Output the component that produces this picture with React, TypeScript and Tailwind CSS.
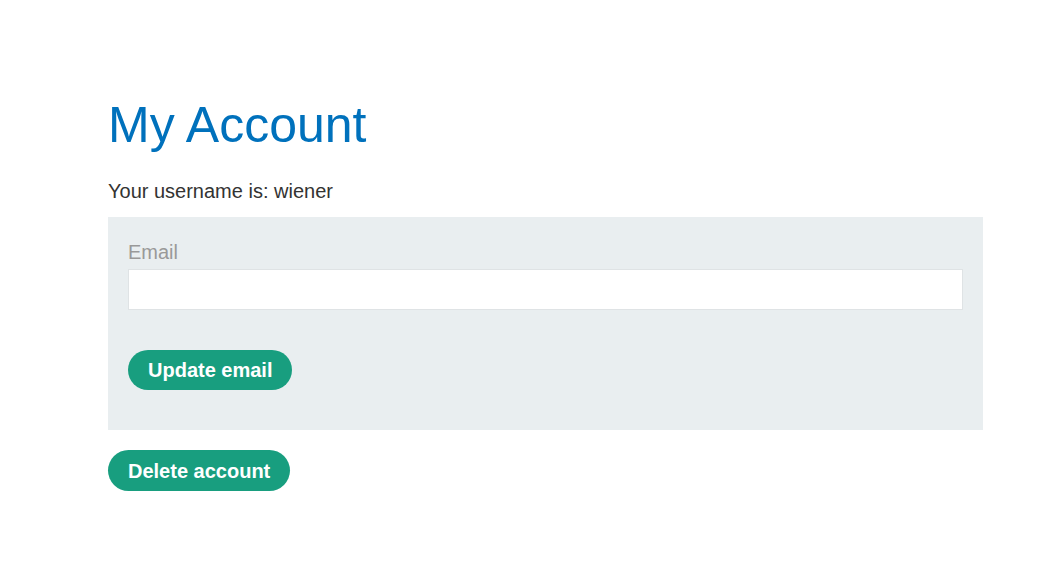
import React from 'react';

const App: React.FC = () => {
    return (
        <div className="min-h-screen bg-white font-['Liberation_Sans',Arial,sans-serif] text-[#333332]">
            <div className="w-[875px] ml-[108px] pt-[100px]">
                {/* Heading */}
                <h1 className="text-[50px] leading-[50px] text-[#0071bc] font-normal">My Account</h1>
                <p className="text-[20px] leading-[20px] mt-[31px]">Your username is: wiener</p>

                {/* Email form */}
                <form
                    className="mt-4 bg-[#e9eef0] px-5 pt-[25px] pb-10"
                    onSubmit={(e) => e.preventDefault()}
                >
                    <label className="block text-[20px] leading-[20px] text-[#999999]">Email</label>
                    <input
                        type="email"
                        className="block w-full h-[41px] mt-[7px] bg-white border border-[#dfe3e5] outline-none px-2 text-[20px]"
                    />
                    <button className="mt-10 h-10 px-5 rounded-full bg-[#189e7f] text-white font-bold text-[20px] leading-none">
                        Update email
                    </button>
                </form>

                {/* Delete */}
                <button className="mt-5 h-[41px] px-5 rounded-full bg-[#189e7f] text-white font-bold text-[20px] leading-none">
                    Delete account
                </button>
            </div>
        </div>
    );
};

export default App;
